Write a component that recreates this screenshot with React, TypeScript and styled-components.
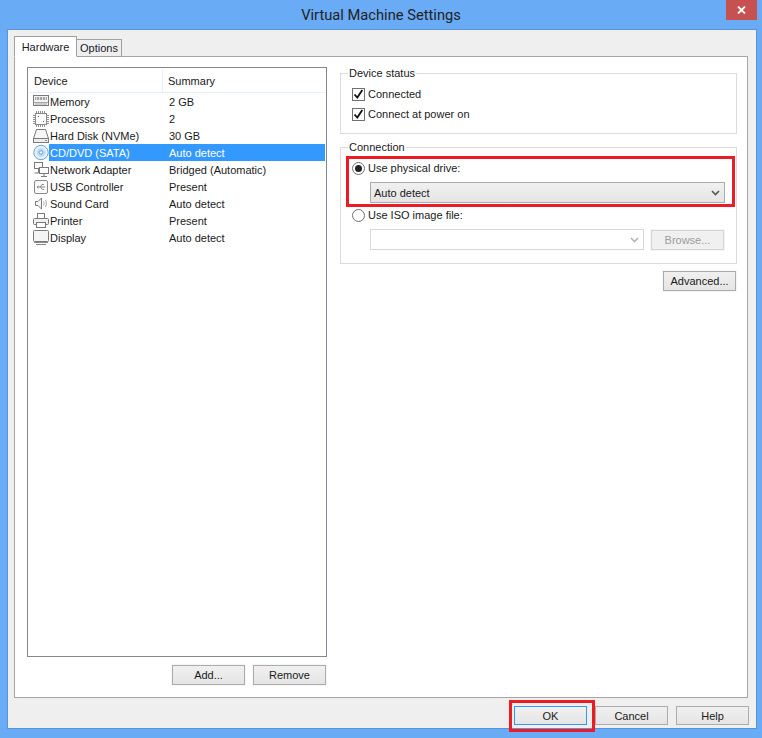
import React from 'react';
import styled, { createGlobalStyle } from 'styled-components';

const Global = createGlobalStyle`
  html, body { margin: 0; padding: 0; background: #6aabf6; }
  *, *::before, *::after { box-sizing: border-box; }
  body { font-family: "Liberation Sans", Arial, sans-serif; font-size: 11px; color: #1a1a1a; }
`;

const ICON_STROKE = '#7a7a7a';

const MemoryIcon = () => (
  <svg width="16" height="17" viewBox="0 0 16 17" fill="none" stroke={ICON_STROKE}>
    <rect x="0.5" y="2.5" width="15" height="10" fill="#f4f4f4" />
    <rect x="2" y="4" width="12" height="3" fill="#a6a6a6" stroke="none" />
    <path d="M3.5 4v3M6.5 4v3M9.5 4v3M12.5 4v3" stroke="#e0e0e0" />
    <path d="M1 9.5h14M2 11h12" stroke="#a6a6a6" />
  </svg>
);

const ProcessorIcon = () => (
  <svg width="16" height="17" viewBox="0 0 16 17" fill="none" stroke="#8a8a8a">
    <rect x="2.5" y="3.5" width="11" height="11" fill="#fafafa" />
    <path d="M3.5 1v2M5.5 1v2M7.5 1v2M9.5 1v2M11.5 1v2M3.5 15v2M5.5 15v2M7.5 15v2M9.5 15v2M11.5 15v2M0 5.5h2M0 7.5h2M0 9.5h2M0 11.5h2M0 13.5h2M14 5.5h2M14 7.5h2M14 9.5h2M14 11.5h2M14 13.5h2" stroke="#8f8f8f" />
    <rect x="5" y="6" width="1" height="1" fill="#555" stroke="none" />
    <rect x="10" y="11" width="1" height="1" fill="#555" stroke="none" />
  </svg>
);

const DiskIcon = () => (
  <svg width="16" height="17" viewBox="0 0 16 17" fill="none" stroke={ICON_STROKE}>
    <path d="M3.5 2.5h9l3 9h-15z" fill="#f6f6f6" />
    <rect x="0.5" y="11.5" width="15" height="4" fill="#ededed" />
    <path d="M12 13.5h2" stroke="#8a8a8a" />
  </svg>
);

const CdIcon = () => (
  <svg width="16" height="17" viewBox="0 0 16 17" fill="none">
    <circle cx="8" cy="8.5" r="7.2" fill="#e6f2fb" stroke="#6f9fc4" />
    <circle cx="8" cy="8.5" r="4.4" fill="#bcdcf3" />
    <circle cx="8" cy="8.5" r="1.7" fill="#fff" stroke="#6f9fc4" />
  </svg>
);

const NetworkIcon = () => (
  <svg width="16" height="17" viewBox="0 0 16 17" fill="none" stroke={ICON_STROKE}>
    <rect x="1.5" y="1.5" width="8" height="6" fill="#fafafa" />
    <rect x="6.5" y="6.5" width="9" height="6" fill="#fafafa" />
    <path d="M5.5 8v4h-4M11 13v3M8 15.5h6" />
  </svg>
);

const UsbIcon = () => (
  <svg width="16" height="17" viewBox="0 0 16 17" fill="none" stroke="#8a8a8a">
    <rect x="1.5" y="2.5" width="13" height="13" rx="1.5" fill="#fafafa" />
    <path d="M4 9h8M7 9l2-2.5h2M7.5 9l2 2.5h1.5M4 9l1.5-1M4 9l1.5 1" />
  </svg>
);

const SoundIcon = () => (
  <svg width="16" height="17" viewBox="0 0 16 17" fill="none" stroke={ICON_STROKE}>
    <path d="M2.5 6.5h2.5l3.5-3.5v11l-3.5-3.5h-2.5z" fill="#f6f6f6" />
    <path d="M10.5 6.5c.7 1.3.7 2.7 0 4M12.5 5c1.2 2.3 1.2 4.7 0 7" stroke="#a0a0a0" />
  </svg>
);

const PrinterIcon = () => (
  <svg width="16" height="17" viewBox="0 0 16 17" fill="none" stroke={ICON_STROKE}>
    <rect x="4.5" y="1.5" width="7" height="5" fill="#fff" />
    <rect x="0.5" y="6.5" width="15" height="6" rx="1" fill="#f0f0f0" />
    <rect x="3.5" y="10.5" width="9" height="5" fill="#fff" />
  </svg>
);

const DisplayIcon = () => (
  <svg width="16" height="17" viewBox="0 0 16 17" fill="none" stroke={ICON_STROKE}>
    <rect x="0.5" y="1.5" width="15" height="11" rx="1" fill="#f4f4f4" />
    <path d="M1 13.5h14M3 15.5h10" stroke="#8a8a8a" />
  </svg>
);

const devices = [
  { name: 'Memory', summary: '2 GB', icon: <MemoryIcon /> },
  { name: 'Processors', summary: '2', icon: <ProcessorIcon /> },
  { name: 'Hard Disk (NVMe)', summary: '30 GB', icon: <DiskIcon /> },
  { name: 'CD/DVD (SATA)', summary: 'Auto detect', icon: <CdIcon />, selected: true },
  { name: 'Network Adapter', summary: 'Bridged (Automatic)', icon: <NetworkIcon /> },
  { name: 'USB Controller', summary: 'Present', icon: <UsbIcon /> },
  { name: 'Sound Card', summary: 'Auto detect', icon: <SoundIcon /> },
  { name: 'Printer', summary: 'Present', icon: <PrinterIcon /> },
  { name: 'Display', summary: 'Auto detect', icon: <DisplayIcon /> },
];

const Chevron = ({ muted }: { muted?: boolean }) => (
  <svg width="9" height="6" viewBox="0 0 9 6" fill="none" stroke={muted ? '#b4b4b4' : '#555'} strokeWidth="1.6">
    <path d="M1 1l3.5 3.5L8 1" />
  </svg>
);

const Tick = () => (
  <svg width="11" height="11" viewBox="0 0 11 11" fill="none" stroke="#111" strokeWidth="1.8">
    <path d="M1.5 5.5l2.8 3 5-7.5" />
  </svg>
);

export default function App() {
  return (
    <Screen>
      <Global />
      <TitleBar>
        <Title>Virtual Machine Settings</Title>
        <CloseButton>
          <svg width="9" height="8" viewBox="0 0 9 8" fill="none" stroke="#fff" strokeWidth="1.8">
            <path d="M1 0.5l7 7M8 0.5l-7 7" />
          </svg>
        </CloseButton>
      </TitleBar>
      <Client>
        <TabStrip>
          <Tab $active>Hardware</Tab>
          <Tab>Options</Tab>
        </TabStrip>
        <Pane>
          <LeftColumn>
            <DeviceList>
              <ListHeader>
                <HeaderCell $first>Device</HeaderCell>
                <HeaderCell>Summary</HeaderCell>
              </ListHeader>
              {devices.map(d => (
                <DeviceRow key={d.name}>
                  <DeviceIcon>{d.icon}</DeviceIcon>
                  <DeviceCells $selected={d.selected}>
                    <DeviceName>{d.name}</DeviceName>
                    <span>{d.summary}</span>
                  </DeviceCells>
                </DeviceRow>
              ))}
            </DeviceList>
            <ListButtons>
              <Button>Add...</Button>
              <Button>Remove</Button>
            </ListButtons>
          </LeftColumn>
          <RightColumn>
            <Group $height={61}>
              <GroupTitle>Device status</GroupTitle>
              <OptionRow>
                <CheckBox>
                  <Tick />
                </CheckBox>
                Connected
              </OptionRow>
              <OptionRow>
                <CheckBox>
                  <Tick />
                </CheckBox>
                Connect at power on
              </OptionRow>
            </Group>
            <Group $height={117}>
              <GroupTitle>Connection</GroupTitle>
              <HighlightedOption>
                <OptionRow>
                  <Radio $checked />
                  Use physical drive:
                </OptionRow>
                <DriveSelect>
                  Auto detect
                  <Chevron />
                </DriveSelect>
              </HighlightedOption>
              <OptionRow>
                <Radio />
                Use ISO image file:
              </OptionRow>
              <IsoRow>
                <IsoCombo>
                  <Chevron muted />
                </IsoCombo>
                <Button $disabled>Browse...</Button>
              </IsoRow>
            </Group>
            <AdvancedRow>
              <Button>Advanced...</Button>
            </AdvancedRow>
          </RightColumn>
        </Pane>
        <Footer>
          <OkWrap>
            <Button $default $short>OK</Button>
          </OkWrap>
          <Button $short>Cancel</Button>
          <Button $short>Help</Button>
        </Footer>
      </Client>
    </Screen>
  );
}

const Screen = styled.div`
  width: 762px;
  height: 738px;
  background: #6aabf6;
  overflow: hidden;
`;

const TitleBar = styled.div`
  position: relative;
  height: 29px;
  display: flex;
  justify-content: center;
  align-items: center;
`;

const Title = styled.div`
  font-family: Roboto, sans-serif;
  font-size: 14.7px;
  color: #222;
  padding-top: 1px;
`;

const CloseButton = styled.div`
  position: absolute;
  top: 0;
  right: 5px;
  width: 31px;
  height: 20px;
  background: #c75050;
  display: flex;
  align-items: center;
  justify-content: center;
`;

const Client = styled.div`
  width: 750px;
  height: 700px;
  margin-left: 7px;
  padding: 6px 7px 0 6px;
  background: #efefef;
  border: 1px solid #5a94d8;
`;

const TabStrip = styled.div`
  display: flex;
  align-items: flex-end;
  height: 21px;
  position: relative;
  z-index: 1;
  margin-bottom: -1px;
`;

const Tab = styled.div<{ $active?: boolean }>`
  height: ${p => (p.$active ? '21px' : '18px')};
  width: ${p => (p.$active ? '63px' : '45px')};
  background: ${p => (p.$active ? '#fff' : '#efefef')};
  border: 1px solid #a0a0a0;
  border-bottom: ${p => (p.$active ? '1px solid #fff' : '1px solid #a0a0a0')};
  ${p => !p.$active && 'border-left: none;'}
  display: flex;
  align-items: center;
  justify-content: center;
  color: #1a1a2a;
`;

const Pane = styled.div`
  width: 734px;
  height: 642px;
  background: #fff;
  border: 1px solid #a6a6a6;
  padding: 10px 10px 0 12px;
  display: flex;
  gap: 13px;
`;

const LeftColumn = styled.div`
  width: 300px;
`;

const DeviceList = styled.div`
  height: 590px;
  border: 1px solid #828790;
  padding: 0 1px;
`;

const ListHeader = styled.div`
  display: flex;
  height: 25px;
  padding-top: 1px;
  border-bottom: 1px solid #e5eefa;
`;

const HeaderCell = styled.div<{ $first?: boolean }>`
  display: flex;
  align-items: center;
  padding-left: 5px;
  ${p => p.$first && 'width: 134px; border-right: 1px solid #e5eefa;'}
`;

const DeviceRow = styled.div`
  display: flex;
  height: 17px;
  padding-left: 4px;
`;

const DeviceIcon = styled.span`
  width: 17px;
  flex: none;
  display: flex;
  align-items: center;
`;

const DeviceCells = styled.div<{ $selected?: boolean }>`
  flex: 1;
  display: flex;
  align-items: center;
  padding-left: 1px;
  margin-left: -1px;
  background: ${p => (p.$selected ? '#3399ff' : 'transparent')};
  color: ${p => (p.$selected ? '#fff' : '#1a1a1a')};
`;

const DeviceName = styled.span`
  width: 119px;
  white-space: nowrap;
`;

const ListButtons = styled.div`
  display: flex;
  justify-content: flex-end;
  gap: 8px;
  margin-top: 8px;
  padding-right: 1px;
`;

const Button = styled.div<{ $default?: boolean; $disabled?: boolean; $short?: boolean }>`
  width: 73px;
  height: ${p => (p.$short ? '19px' : '20px')};
  display: flex;
  align-items: center;
  justify-content: center;
  border: 1px solid ${p => (p.$default ? '#3399ff' : p.$disabled ? '#d4d4d4' : '#acacac')};
  box-shadow: ${p => (p.$short ? 'none' : '0 0 0 1px #f6f6f6')};
  background: ${p => (p.$disabled ? '#f0f0f0' : 'linear-gradient(#f0f0f0, #e5e5e5)')};
  color: ${p => (p.$disabled ? '#9c9c9c' : '#1a1a1a')};
`;

const RightColumn = styled.div`
  width: 397px;
  padding-top: 6px;
`;

const Group = styled.div<{ $height: number }>`
  position: relative;
  height: ${p => p.$height}px;
  border: 1px solid #dcdcdc;
  padding: 10px 0 0 11px;
  margin-bottom: 13px;
`;

const GroupTitle = styled.div`
  position: absolute;
  top: -8px;
  left: 7px;
  padding: 0 1px;
  line-height: 15px;
  background: #fff;
`;

const OptionRow = styled.div`
  display: flex;
  align-items: center;
  gap: 3px;
  height: 20px;
`;

const CheckBox = styled.span`
  width: 13px;
  height: 13px;
  flex: none;
  border: 1px solid #707070;
  display: flex;
  align-items: center;
  justify-content: center;
`;

const Radio = styled.span<{ $checked?: boolean }>`
  width: 13px;
  height: 13px;
  flex: none;
  border: 1px solid #707070;
  border-radius: 50%;
  display: flex;
  align-items: center;
  justify-content: center;
  &::after {
    content: '';
    width: 7px;
    height: 7px;
    border-radius: 50%;
    background: ${p => (p.$checked ? '#222' : 'transparent')};
  }
`;

const HighlightedOption = styled.div`
  position: relative;
  margin-bottom: 2px;
  &::after {
    content: '';
    position: absolute;
    top: -2px;
    left: -6px;
    width: 389px;
    height: 51px;
    border: 3px solid #ed1c24;
    pointer-events: none;
  }
`;

const DriveSelect = styled.div`
  margin: 4px 0 0 18px;
  width: 355px;
  height: 21px;
  border: 1px solid #acacac;
  background: linear-gradient(#f0f0f0, #e5e5e5);
  display: flex;
  align-items: center;
  justify-content: space-between;
  padding: 0 4px 0 3px;
`;

const IsoRow = styled.div`
  display: flex;
  align-items: center;
  gap: 7px;
  margin: 4px 0 0 18px;
`;

const IsoCombo = styled.div`
  width: 274px;
  height: 21px;
  border: 1px solid #d9d9d9;
  display: flex;
  align-items: center;
  justify-content: flex-end;
  padding-right: 4px;
`;

const AdvancedRow = styled.div`
  display: flex;
  justify-content: flex-end;
  padding-right: 1px;
  margin-top: -6px;
`;

const Footer = styled.div`
  display: flex;
  justify-content: flex-end;
  gap: 8px;
  padding: 8px 0 0;
  height: 32px;
`;

const OkWrap = styled.div`
  position: relative;
  &::after {
    content: '';
    position: absolute;
    top: -6px;
    left: -5px;
    width: 86px;
    height: 32px;
    border: 3px solid #ed1c24;
    pointer-events: none;
  }
`;
